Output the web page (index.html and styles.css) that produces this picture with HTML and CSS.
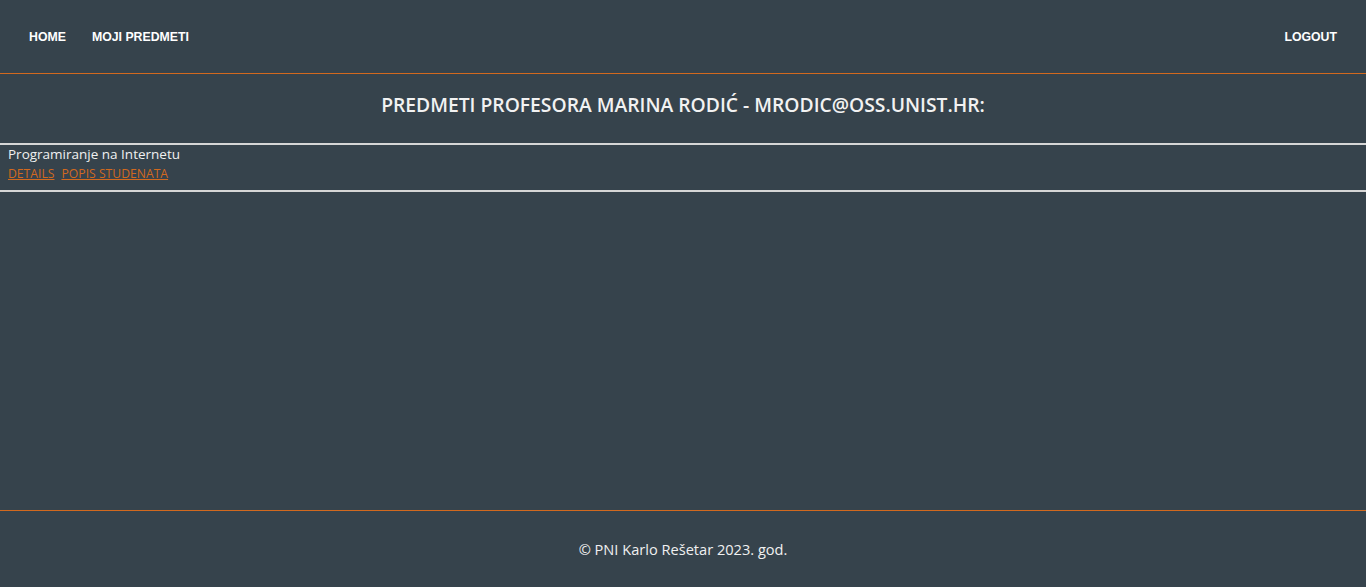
FILE: index.html
```html
<!DOCTYPE html>
<html lang="hr">
<head>
<meta charset="utf-8">
<title>Predmeti</title>
<link rel="stylesheet" href="styles.css">
</head>
<body>
<div class="page">
  <nav class="navbar">
    <div class="nav-group">
      <a class="nav-link" href="#">HOME</a>
      <a class="nav-link" href="#">MOJI PREDMETI</a>
    </div>
    <div class="nav-group">
      <a class="nav-link" href="#">LOGOUT</a>
    </div>
  </nav>
  <main class="content">
    <h2 class="title">PREDMETI PROFESORA MARINA RODIĆ - MRODIC@OSS.UNIST.HR:</h2>
    <table class="subjects">
      <tbody>
        <tr>
          <td class="cell">
            <div class="subject-name">Programiranje na Internetu</div>
            <div class="subject-links"><a class="link" href="#">DETAILS</a><a class="link" href="#">POPIS STUDENATA</a></div>
          </td>
        </tr>
      </tbody>
    </table>
  </main>
  <footer class="footer">© PNI Karlo Rešetar 2023. god.</footer>
</div>
</body>
</html>
```
FILE: styles.css
```css
html, body {
  margin: 0;
  padding: 0;
  background: #36434c;
}
body {
  font-family: "Open Sans", "Liberation Sans", sans-serif;
  color: #f0f0f0;
}
.page {
  min-height: 100vh;
  display: flex;
  flex-direction: column;
}
.navbar {
  height: 73px;
  border-bottom: 1px solid #d2691e;
  display: flex;
  justify-content: space-between;
  align-items: center;
  padding: 0 29px;
}
.nav-group {
  display: flex;
  align-items: center;
  gap: 26px;
  line-height: 16px;
  height: 16px;
}
.nav-link {
  display: block;
  font-family: "Liberation Sans", Arial, sans-serif;
  font-weight: bold;
  font-size: 12.3px;
  line-height: 16px;
  color: #ffffff;
  text-decoration: none;
}
.content {
  flex: 1;
}
.title {
  margin: 0;
  height: 69px;
  padding-bottom: 9px;
  box-sizing: border-box;
  display: flex;
  align-items: center;
  justify-content: center;
  font-size: 19.3px;
  font-weight: 600;
  color: #f2f2f2;
}
.subjects {
  width: 100%;
  border-collapse: collapse;
  border-top: 2px solid #d6d6d6;
  border-bottom: 2px solid #d6d6d6;
}
.cell {
  padding: 0 8px 7px;
  font-size: 13.5px;
  line-height: 19px;
}
.subject-name {
  color: #f0f0f0;
}
.subject-links {
  display: flex;
  gap: 7px;
}
.link {
  color: #d2691e;
  font-size: 12.2px;
}
.footer {
  height: 76px;
  border-top: 1px solid #d2691e;
  display: flex;
  align-items: center;
  justify-content: center;
  font-size: 14.6px;
  color: #f0f0f0;
}
```
